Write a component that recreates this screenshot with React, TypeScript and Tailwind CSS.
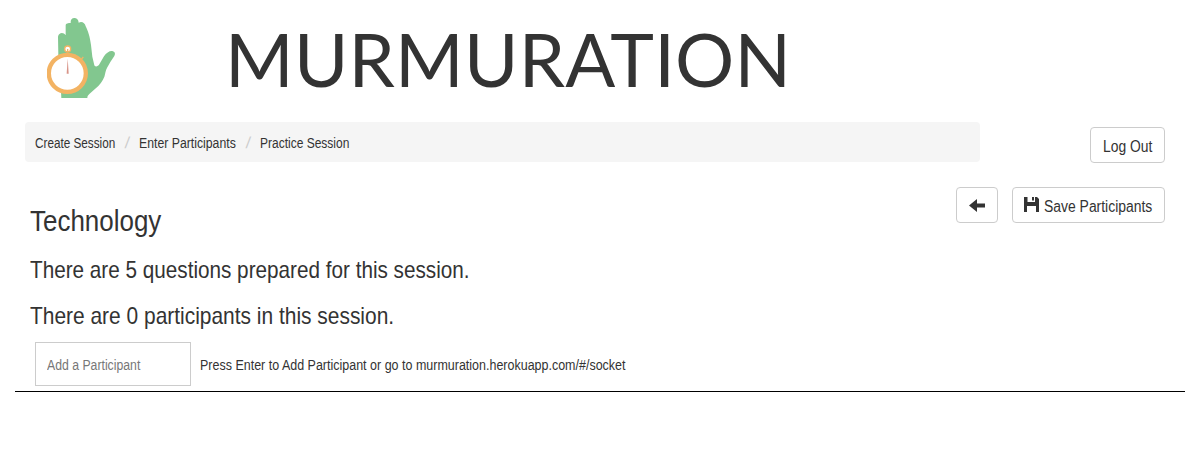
import React from "react";

const button =
  "flex h-9 items-center rounded border border-[#ccc] bg-white text-base leading-none text-[#333]";

const condensed = "block origin-left whitespace-nowrap";

function Logo() {
  return (
    <svg className="h-[82px] w-[70px] shrink-0" viewBox="51 36 210 246">
      <path
        fill="#82c78f"
        d="M94 279L90 200L85 150L84 95C86 83 100 80 107 91L107 61C107 55 115 54 122 54C121 44 126 39 133 39C140 39 146 45 146 53C155 48 165 53 167 64C174 78 180 95 183 120L187 155L193 181C196 187 204 185 208 178L222 154C229 143 239 137 247 138C255 140 257 146 253 153L241 171C234 184 228 191 226 203C224 219 216 230 205 243L178 267C174 271 172 274 172 279Z"
      />
      <circle cx="113" cy="132" r="9" fill="#fff" stroke="#f3b363" strokeWidth="4" />
      <path d="M113 132V142" stroke="#f3b363" strokeWidth="4" />
      <path d="M153 164L160 156" stroke="#f3b363" strokeWidth="4" />
      <circle cx="112" cy="205" r="55.500" fill="#fff" stroke="#f3b363" strokeWidth="13" />
      <path d="M113 160L116 206H110Z" fill="#d89488" />
    </svg>
  );
}

export default function App() {
  return (
    <main className="h-[460px] overflow-hidden bg-white px-[15px] font-['Liberation_Sans',Arial,sans-serif] text-[#333]">
      <header className="flex h-[122px] pt-[17px] pl-8">
        <Logo />
        <h1 className="-mt-[2px] ml-[108px] font-['Lato',sans-serif] text-[74px] leading-[88px] font-normal tracking-[0.2px] whitespace-nowrap">
          MURMURATION
        </h1>
      </header>
      <div className="flex items-start justify-between pr-5 pl-[10px]">
        <nav className="flex h-10 w-[955px] items-center rounded bg-[#f5f5f5] pt-px pl-[10px] text-sm">
          <a className="w-[104px]">
            <span className={condensed + " scale-x-[.838]"}>Create Session</span>
          </a>
          <span className="-ml-[14px] w-[14px] -skew-x-6 text-base text-[#ccc]">/</span>
          <a className="w-[121px]">
            <span className={condensed + " scale-x-[.876]"}>Enter Participants</span>
          </a>
          <span className="-ml-[14px] w-[14px] -skew-x-6 text-base text-[#ccc]">/</span>
          <a>
            <span className={condensed + " scale-x-[.857]"}>Practice Session</span>
          </a>
        </nav>
        <button className={button + " mt-[5px] w-[75px] pt-[3px] pl-3"}>
          <span className={condensed + " scale-x-[.865]"}>Log Out</span>
        </button>
      </div>
      <section className="flex items-start justify-between pr-5 pl-[15px]">
        <div>
          <h2 className="mt-[41px] text-[30px] leading-[33px]">
            <span className={condensed + " scale-x-[.865]"}>Technology</span>
          </h2>
          <h3 className="mt-5 text-2xl leading-[26px]">
            <span className={condensed + " scale-x-[.8625]"}>There are 5 questions prepared for this session.</span>
          </h3>
          <h3 className="mt-5 text-2xl leading-[26px]">
            <span className={condensed + " scale-x-[.872]"}>There are 0 participants in this session.</span>
          </h3>
        </div>
        <div className="flex gap-[14px] pt-6">
          <button className={button + " w-[42px] pl-3"} aria-label="Back">
            <svg className="h-[13px] w-4" viewBox="0 0 16 13" fill="#333">
              <path d="M0 6.500L8 0V4.500H16V8.500H8V13Z" />
            </svg>
          </button>
          <button className={button + " w-[153px] gap-[5px] pl-[11px]"}>
            <svg className="mb-px h-[15px] w-[15px] shrink-0" viewBox="0 0 15 15" fill="#333">
              <path d="M0 0H3.500V5H11V0H13L15 2V15H12V9H3V15H0ZM8 0H10V3.500H8Z" />
            </svg>
            <span className={condensed + " mt-[3px] scale-x-[.87]"}>Save Participants</span>
          </button>
        </div>
      </section>
      <div className="mt-[13px] flex h-[50px] items-start border-b border-black pl-5 text-sm">
        <label className="flex h-11 w-[156px] items-center border border-[#ccc] pt-0.5 pl-[11px]">
          <input
            className="w-[150px] shrink-0 origin-left scale-x-[.875] outline-none placeholder:text-[#777]"
            placeholder="Add a Participant"
          />
        </label>
        <p className="ml-[9px] leading-[46px]">
          <span className={condensed + " scale-x-[.892]"}>
            Press Enter to Add Participant or go to murmuration.herokuapp.com/#/socket
          </span>
        </p>
      </div>
    </main>
  );
}
